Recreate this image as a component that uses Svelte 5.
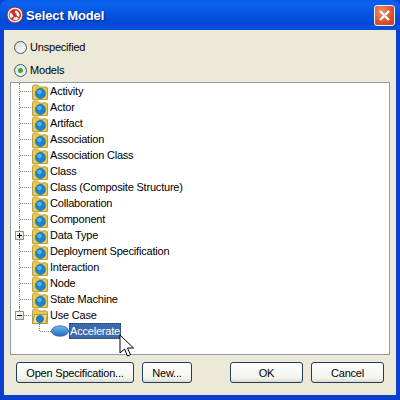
<script>
	const models = [
		{ name: 'Activity' },
		{ name: 'Actor' },
		{ name: 'Artifact' },
		{ name: 'Association' },
		{ name: 'Association Class' },
		{ name: 'Class' },
		{ name: 'Class (Composite Structure)' },
		{ name: 'Collaboration' },
		{ name: 'Component' },
		{ name: 'Data Type', toggle: 'plus' },
		{ name: 'Deployment Specification' },
		{ name: 'Interaction' },
		{ name: 'Node' },
		{ name: 'State Machine' },
		{ name: 'Use Case', toggle: 'minus', open: true }
	];
</script>

<div class="window">
	<header class="titlebar">
		<svg class="app-icon" width="18" height="18" viewBox="0 0 18 18">
			<circle cx="9" cy="9" r="8" fill="#f3e6e0" stroke="#8a3030" />
			<circle cx="9" cy="9" r="6" fill="#c8342e" />
			<path d="M9 4.500a4.500 4.500 0 0 1 4 6.500l-2.500-1.500a1.700 1.700 0 0 0-1.500-2.500zM4.500 12a4.500 4.500 0 0 1 .5-5.500l1.800 2.200a1.700 1.700 0 0 0 .7 2zM13 12.500a4.500 4.500 0 0 1-6 .8l1.300-2.300a1.700 1.700 0 0 0 2.300-.2z" fill="#fff" />
		</svg>
		<span class="title">Select Model</span>
		<button class="close" type="button" aria-label="Close">
			<svg width="13" height="13" viewBox="0 0 13 13">
				<path d="M2 2l9 9M11 2l-9 9" stroke="#fff" stroke-width="2.400" fill="none" />
			</svg>
		</button>
	</header>

	<main class="content">
		<label class="radio first">
			<span class="dot"></span>
			Unspecified
		</label>
		<label class="radio second">
			<span class="dot checked"></span>
			Models
		</label>

		<div class="tree">
			{#each models as model, i}
				<div class="row">
					<span class="guide" class:last={i === models.length - 1}>
						{#if model.toggle}
							<span class="toggle" class:minus={model.toggle === 'minus'}></span>
						{/if}
					</span>
					<svg class="folder" width="16" height="16" viewBox="0 0 16 16">
						<path d="M.5 15.500v-13l1-1.500h4l1.500 2h7.500l1 1v11.500z" fill="#ecc93f" stroke="#9a8a48" stroke-width="0.800" />
						{#if model.open}
							<path d="M.5 15.500l2-9h13l-2 9z" fill="#f5dc82" stroke="#9a8a48" stroke-width="0.800" />
							<circle cx="8" cy="11" r="3.600" fill="#1b7fd0" stroke="#2a6a8c" stroke-width="0.700" />
						{:else}
							<circle cx="8.500" cy="9.500" r="5" fill="#1b84d8" stroke="#2f6f88" stroke-width="0.800" />
							<circle cx="7.500" cy="8" r="2.200" fill="#58b4f0" />
						{/if}
					</svg>
					<span class="label">{model.name}</span>
				</div>
			{/each}
			<div class="row child">
				<span class="guide child-guide"></span>
				<svg class="ellipse" width="18" height="12" viewBox="0 0 18 12">
					<defs>
						<linearGradient id="oval" x1="0" y1="0" x2="0" y2="1">
							<stop offset="0" stop-color="#7ab8ee" />
							<stop offset="1" stop-color="#1e6cc4" />
						</linearGradient>
					</defs>
					<ellipse cx="9" cy="6" rx="8.500" ry="5.200" fill="url(#oval)" stroke="#2a62a8" stroke-width="0.800" />
				</svg>
				<span class="label selected">Accelerate</span>
			</div>
			<svg class="cursor" width="16" height="24" viewBox="0 0 16 24">
				<path d="M1 1v18l4.500-4 3 7 3-1.300-3-6.700h6z" fill="#fff" stroke="#000" stroke-width="1" />
			</svg>
		</div>

		<footer class="actions">
			<button class="btn open-spec" type="button">Open Specification...</button>
			<button class="btn new" type="button">New...</button>
			<span class="spacer"></span>
			<button class="btn wide" type="button">OK</button>
			<button class="btn wide" type="button">Cancel</button>
		</footer>
	</main>
</div>

<style>
	:global(body) {
		margin: 0;
		background: #0a3fd0;
	}

	.window {
		width: 400px;
		height: 400px;
		display: flex;
		flex-direction: column;
		font-family: 'Liberation Sans', Arial, sans-serif;
		font-size: 11px;
		letter-spacing: -0.2px;
		color: #000;
		overflow: hidden;
	}

	.titlebar {
		height: 30px;
		flex: none;
		box-sizing: border-box;
		display: flex;
		align-items: center;
		padding: 0 5px 0 6px;
		gap: 2px;
		background: linear-gradient(#0a5ae8 0%, #0a62f0 12%, #0355e0 45%, #0048d8 75%, #0350dc 100%);
		border-radius: 7px 7px 0 0;
	}

	.title {
		color: #fff;
		font-family: 'Liberation Sans', Arial, sans-serif;
		font-size: 13px;
		font-weight: 700;
		letter-spacing: -0.1px;
		text-shadow: 1px 1px 1px #0a2a90;
	}

	.close {
		margin-left: auto;
		width: 21px;
		height: 21px;
		padding: 0;
		display: flex;
		align-items: center;
		justify-content: center;
		border: 1px solid #f0f0f0;
		border-radius: 3px;
		background: radial-gradient(circle at 35% 30%, #f09070, #d8502c 60%, #c03c1c);
	}

	.content {
		flex: 1;
		display: flex;
		flex-direction: column;
		background: #ece9d8;
		margin: 0 4px 5px;
		padding: 0 6px;
		min-height: 0;
	}

	.radio {
		display: flex;
		align-items: center;
		gap: 3px;
		height: 14px;
		padding-left: 4px;
	}

	.first {
		margin-top: 10px;
	}

	.second {
		margin-top: 9px;
	}

	.dot {
		width: 11px;
		height: 11px;
		border: 1px solid #3a5a80;
		border-radius: 50%;
		background: linear-gradient(135deg, #dcdcd4, #fff);
		display: flex;
		align-items: center;
		justify-content: center;
	}

	.dot.checked::after {
		content: '';
		width: 5px;
		height: 5px;
		border-radius: 50%;
		background: #3aa83a;
	}

	.tree {
		position: relative;
		height: 273px;
		flex: none;
		box-sizing: border-box;
		margin-top: 5px;
		background: #fff;
		border: 1px solid #8f9ca8;
	}

	.row {
		display: flex;
		align-items: center;
		height: 16px;
	}

	.guide {
		position: relative;
		align-self: stretch;
		width: 20px;
		flex: none;
		box-sizing: border-box;
	}

	.guide::before {
		content: '';
		position: absolute;
		left: 8px;
		top: 0;
		bottom: 0;
		border-left: 1px dotted #808080;
	}

	.guide.last::before {
		bottom: 8px;
	}

	.guide::after {
		content: '';
		position: absolute;
		left: 9px;
		right: 0;
		top: 8px;
		border-top: 1px dotted #808080;
	}

	.toggle {
		position: absolute;
		z-index: 1;
		left: 4px;
		top: 4px;
		width: 7px;
		height: 7px;
		border: 1px solid #8a94a0;
		background: linear-gradient(135deg, #fff, #d8d8cc);
	}

	.toggle::before {
		content: '';
		position: absolute;
		left: 1px;
		right: 1px;
		top: 3px;
		height: 1px;
		background: #000;
	}

	.toggle:not(.minus)::after {
		content: '';
		position: absolute;
		top: 1px;
		bottom: 1px;
		left: 3px;
		width: 1px;
		background: #000;
	}

	.folder {
		flex: none;
		margin: 2px 2px 0 1px;
	}

	.label {
		line-height: 16px;
		white-space: nowrap;
	}

	.child {
		padding-left: 20px;
	}

	.child-guide::before {
		bottom: 8px;
	}

	.ellipse {
		flex: none;
	}

	.selected {
		background: #3e68ae;
		color: #fff;
		padding: 0 1px;
		outline: 1px dotted #24406c;
		outline-offset: -1px;
	}

	.cursor {
		position: absolute;
		left: 108px;
		top: 251px;
	}

	.actions {
		display: flex;
		align-items: center;
		gap: 8px;
		margin-top: 7px;
		padding: 0 6px;
	}

	.spacer {
		flex: 1;
	}

	.btn {
		height: 21px;
		padding: 0;
		font: inherit;
		letter-spacing: inherit;
		color: #000;
		border: 1px solid #1f3f5c;
		border-radius: 3px;
		background: linear-gradient(#fff, #f4f4ee 80%, #dcd8c8);
	}

	.open-spec {
		width: 118px;
	}

	.new {
		width: 50px;
	}

	.wide {
		width: 73px;
	}
</style>
